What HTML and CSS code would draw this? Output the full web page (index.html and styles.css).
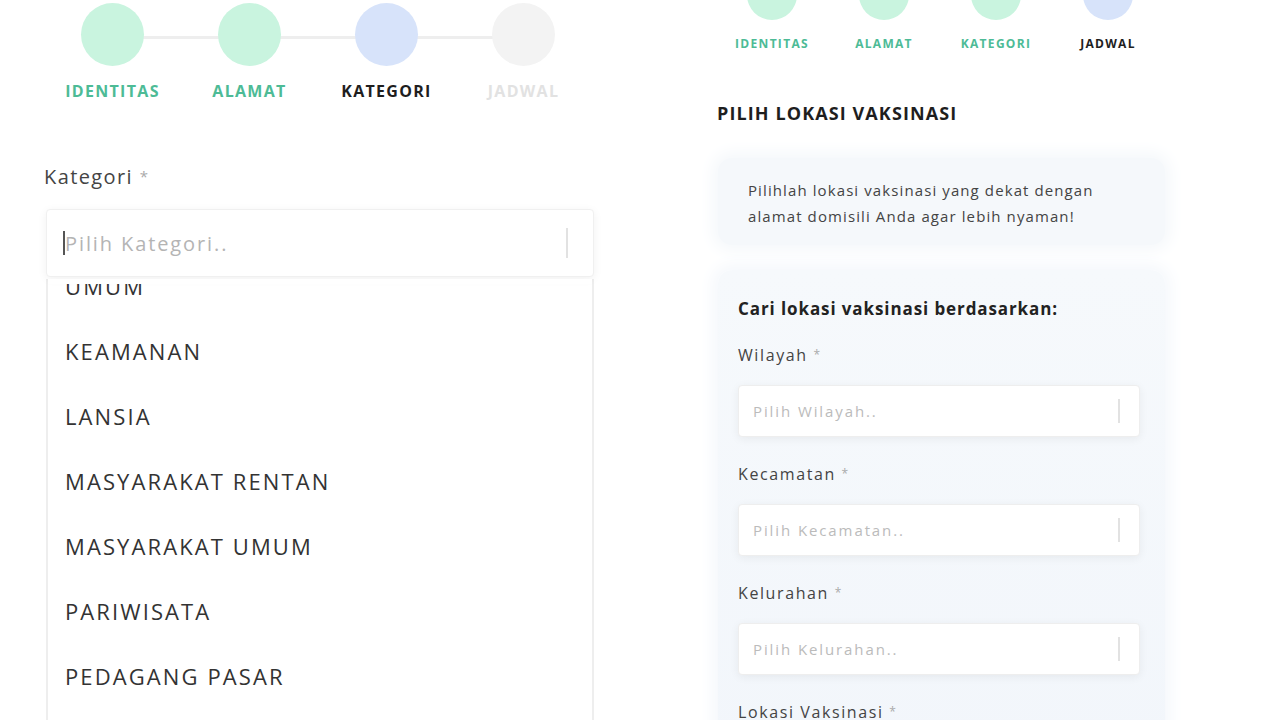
FILE: index.html
```html
<!DOCTYPE html>
<html lang="id">
<head>
<meta charset="utf-8">
<title>Pendaftaran Vaksinasi</title>
<link rel="stylesheet" href="styles.css">
</head>
<body>
<div class="page">
  <section class="pane pane-left">
    <div class="steps steps-big">
      <div class="step done"><span class="dot"></span><span class="lbl">IDENTITAS</span></div>
      <div class="step done"><span class="dot"></span><span class="lbl">ALAMAT</span></div>
      <div class="step active"><span class="dot"></span><span class="lbl">KATEGORI</span></div>
      <div class="step todo last"><span class="dot"></span><span class="lbl">JADWAL</span></div>
    </div>

    <div class="field-label big-label">Kategori <span class="req">*</span></div>
    <div class="select big-select">
      <span class="caret"></span><span class="ph">Pilih Kategori..</span>
      <span class="sep"></span>
    </div>
    <div class="menu">
      <div class="menu-cover"></div>
      <div class="menu-inner">
        <div class="opt">UMUM</div>
        <div class="opt">KEAMANAN</div>
        <div class="opt">LANSIA</div>
        <div class="opt">MASYARAKAT RENTAN</div>
        <div class="opt">MASYARAKAT UMUM</div>
        <div class="opt">PARIWISATA</div>
        <div class="opt">PEDAGANG PASAR</div>
        <div class="opt">PELAJAR</div>
      </div>
    </div>
  </section>

  <section class="pane pane-right">
    <div class="steps steps-small">
      <div class="step done"><span class="dot"></span><span class="lbl">IDENTITAS</span></div>
      <div class="step done"><span class="dot"></span><span class="lbl">ALAMAT</span></div>
      <div class="step done"><span class="dot"></span><span class="lbl">KATEGORI</span></div>
      <div class="step active last"><span class="dot"></span><span class="lbl">JADWAL</span></div>
    </div>

    <h2 class="title">PILIH LOKASI VAKSINASI</h2>

    <div class="info">Pilihlah lokasi vaksinasi yang dekat dengan alamat domisili Anda agar lebih nyaman!</div>

    <div class="card">
      <h3 class="card-title">Cari lokasi vaksinasi berdasarkan:</h3>
      <div class="group">
        <div class="field-label sm-label">Wilayah <span class="req">*</span></div>
        <div class="select sm-select"><span class="ph">Pilih Wilayah..</span><span class="sep"></span></div>
      </div>
      <div class="group">
        <div class="field-label sm-label">Kecamatan <span class="req">*</span></div>
        <div class="select sm-select"><span class="ph">Pilih Kecamatan..</span><span class="sep"></span></div>
      </div>
      <div class="group">
        <div class="field-label sm-label">Kelurahan <span class="req">*</span></div>
        <div class="select sm-select"><span class="ph">Pilih Kelurahan..</span><span class="sep"></span></div>
      </div>
      <div class="group">
        <div class="field-label sm-label">Lokasi Vaksinasi <span class="req">*</span></div>
      </div>
    </div>
  </section>
</div>
</body>
</html>
```
FILE: styles.css
```css
* { box-sizing: border-box; }
html, body { margin: 0; padding: 0; }
body {
  width: 1280px;
  height: 720px;
  overflow: hidden;
  background: #ffffff;
  font-family: "Open Sans", "Liberation Sans", sans-serif;
  color: #333;
}
.page { display: flex; height: 720px; }
.pane { width: 640px; height: 720px; overflow: hidden; }
.pane-left { padding-left: 44px; padding-right: 46px; }
.pane-right { padding-left: 76px; padding-right: 116px; }

/* steps */
.steps { display: grid; grid-template-columns: repeat(4, 1fr); }
.step { position: relative; display: flex; flex-direction: column; align-items: center; }
.step .dot { border-radius: 50%; display: block; position: relative; z-index: 1; }
.step::before {
  content: "";
  position: absolute;
  left: 50%;
  width: 100%;
  height: 3px;
  background: #eeeeee;
}
.step.last::before { display: none; }
.step.done .dot { background: #c9f4df; }
.step.active .dot { background: #d7e3fa; }
.step.todo .dot { background: #f3f3f3; }
.step .lbl { font-weight: 700; white-space: nowrap; }
.step.done .lbl { color: #4dbb96; }
.step.active .lbl { color: #1e1e1e; }
.step.todo .lbl { color: #e2e2e2; }

.steps-big { width: 548px; padding-top: 3px; }
.steps-big .dot { width: 63px; height: 63px; }
.steps-big .step::before { top: 33px; }
.steps-big .lbl { font-size: 16px; line-height: 22px; letter-spacing: 1.3px; margin-top: 14px; }

.steps-small { width: 448px; margin-top: -30px; }
.steps-small .dot { width: 50px; height: 50px; }
.steps-small .step::before { top: 24px; }
.steps-small .lbl { font-size: 12px; line-height: 18px; letter-spacing: 1.3px; margin-top: 15px; }

/* left form */
.field-label { color: #444; }
.req { color: #aaa; font-size: 0.75em; vertical-align: top; letter-spacing: 0; }
.big-label { font-size: 20px; line-height: 27px; letter-spacing: 1.4px; margin-top: 61px; }
.select {
  display: flex;
  align-items: center;
  background: #fff;
  border: 1px solid #f0f0f0;
  border-radius: 4px;
  box-shadow: 0 2px 10px rgba(0, 0, 0, 0.06);
  position: relative;
}
.ph { color: #b4b4b4; flex: 1; white-space: nowrap; }
.sep { width: 2px; background: #e2e2e2; }
.big-select { margin-top: 19px; margin-left: 2px; height: 68px; padding: 0 25px 0 16px; }
.big-select .ph { font-size: 20px; letter-spacing: 1.9px; }
.big-select .sep { height: 30px; }
.caret { width: 2px; height: 24px; background: #555; margin-right: 0; }

.menu {
  margin-top: 2px;
  margin-left: 2px;
  width: 548px;
  height: 450px;
  overflow: hidden;
  border-left: 2px solid #eeeeee;
  border-right: 2px solid #eeeeee;
}
.menu-cover { height: 5px; background: #fff; position: relative; z-index: 1; }
.menu-inner { margin-top: -31px; }
.opt {
  height: 65px;
  display: flex;
  align-items: center;
  padding-left: 17px;
  font-size: 22px;
  letter-spacing: 2.1px;
  color: #333;
  white-space: nowrap;
}

/* right */
.title { font-size: 18px; line-height: 24px; font-weight: 700; color: #1e1e1e; margin: 48px 0 0 1px; letter-spacing: 1.1px; }
.info {
  margin-top: 33px;
  margin-left: 2px;
  width: 447px;
  background: #f5f8fb;
  border-radius: 14px;
  padding: 19px 40px 16px 30px;
  font-size: 15px;
  line-height: 26px;
  letter-spacing: 1.1px;
  color: #444;
  box-shadow: 0 0 16px 6px #f5f8fb;
}
.card {
  margin-top: 25px;
  margin-left: 2px;
  width: 447px;
  background: linear-gradient(180deg, #f6f9fc 0%, #f2f6fb 100%);
  border-radius: 14px;
  padding: 27px 25px 20px 20px;
  height: 500px;
  box-shadow: 0 0 16px 6px #f5f8fc;
}
.card-title { font-size: 17px; line-height: 24px; font-weight: 700; color: #222; margin: 0 0 23px 0; letter-spacing: 0.9px; white-space: nowrap; }
.group { margin-bottom: 26px; }
.sm-label { font-size: 16px; line-height: 22px; letter-spacing: 1.6px; }
.sm-select { margin-top: 19px; height: 52px; padding: 0 19px 0 14px; border-color: #eeeeee; }
.sm-select .ph { font-size: 15px; letter-spacing: 1.9px; color: #bbb; }
.sm-select .sep { height: 24px; }
```
